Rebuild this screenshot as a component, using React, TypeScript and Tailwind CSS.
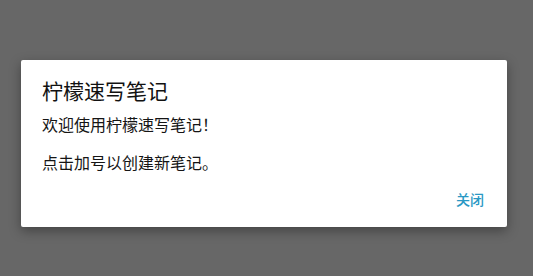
export default function App() {
  return (
    <div
      className="w-[533px] h-[276px] bg-[#676767] pt-[60px] pl-[21px]"
      style={{ fontFamily: '"Noto Sans CJK SC", "Noto Sans", sans-serif' }}
    >
      <div className="w-[486px] h-[167px] bg-white rounded-[2px] shadow-[0_4px_12px_rgba(0,0,0,0.35)] flex flex-col pl-[21px] pr-[23px]">
        <div className="mt-[16px] text-[21px] leading-[28px] text-[#111]">柠檬速写笔记</div>
        <div className="mt-[8px] text-[16px] leading-[24px] text-[#151515]">欢迎使用柠檬速写笔记！</div>
        <div className="mt-[14px] text-[16px] leading-[24px] text-[#151515]">点击加号以创建新笔记。</div>
        <div className="mt-[15px] flex justify-end">
          <span className="text-[14px] leading-[20px] font-medium text-[#2a98c4]">关闭</span>
        </div>
      </div>
    </div>
  );
}
